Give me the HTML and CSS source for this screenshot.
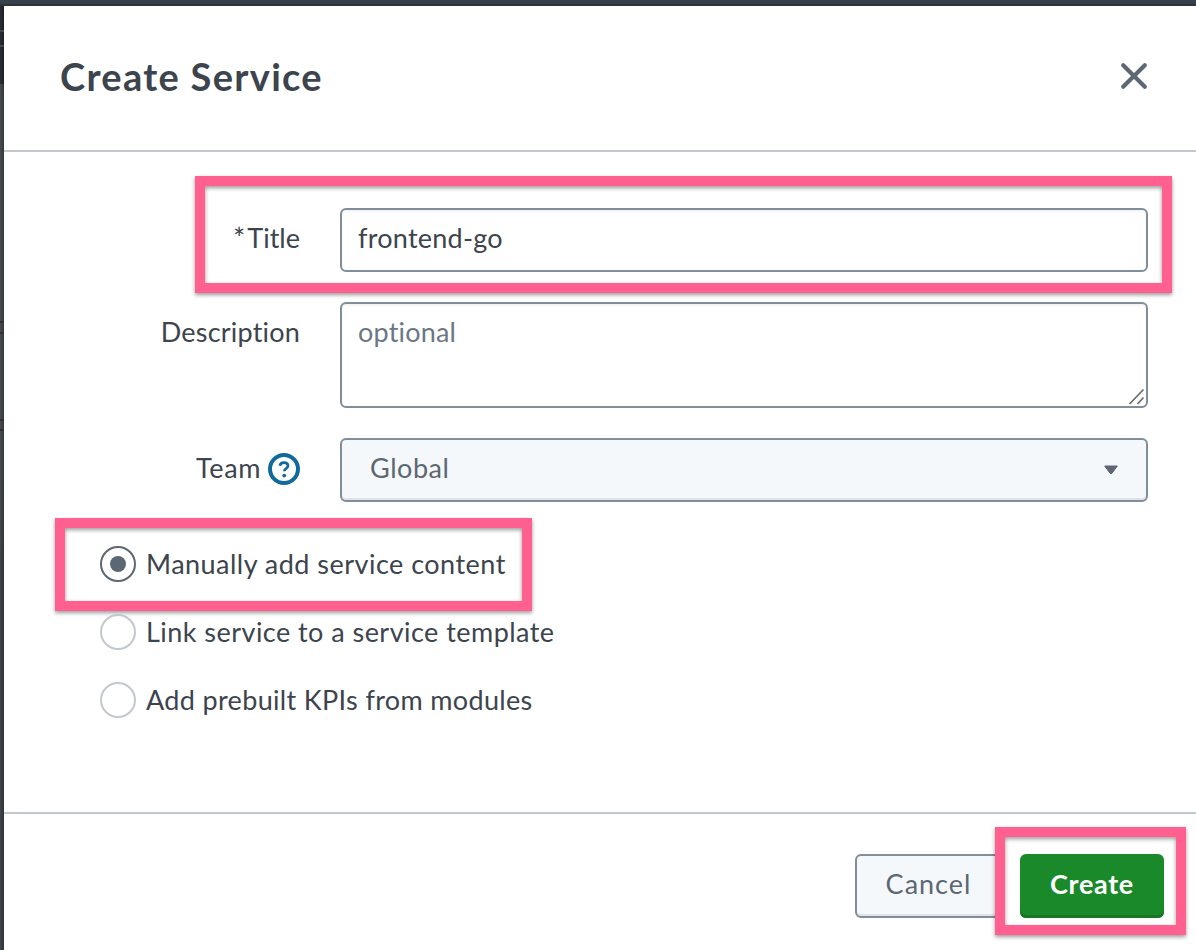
FILE: index.html
```
<!DOCTYPE html>
<html lang="en">
<head>
<meta charset="utf-8">
<title>Create Service</title>
<link rel="stylesheet" href="styles.css">
</head>
<body>
<div class="backdrop">
  <div class="edge"><i class="trace trace-a"></i><i class="trace trace-b"></i><i class="trace trace-c"></i></div>
  <main class="dialog">
    <header class="head">
      <h1 class="heading">Create Service</h1>
      <svg class="close" width="28" height="28" viewBox="0 0 28 28"><path d="M3.2 3.2 24.8 24.8M24.8 3.2 3.2 24.8" stroke="#5c6773" stroke-width="4.2" stroke-linecap="round"/></svg>
    </header>
    <section class="body">
      <div class="row row-title">
        <div class="label"><span class="star">*</span><span class="t-title">Title</span></div>
        <div class="field"><span class="t-value">frontend-go</span></div>
        <div class="callout callout-title"></div>
      </div>
      <div class="row">
        <div class="label"><span class="t-desc">Description</span></div>
        <div class="field area"><span class="t-optional">optional</span>
          <svg class="grip" width="18" height="18" viewBox="0 0 18 18"><path d="M1.5 16 15.500 1.500M9.500 16 15.500 9.500" stroke="#68696a" stroke-width="1.7" fill="none"/></svg>
        </div>
      </div>
      <div class="row">
        <div class="label"><span class="t-team">Team</span>
          <svg class="help" width="32" height="32" viewBox="0 0 32 32"><circle cx="16" cy="16" r="14" fill="#fff" stroke="#106b9c" stroke-width="4"/><path d="M11.900 12.800C12.200 10.600 13.700 9.600 16 9.600c2.300 0 4 1.200 4 3.200 0 2.800-3.700 2.600-3.700 5.500" fill="none" stroke="#106b9c" stroke-width="2.700"/><circle cx="16.200" cy="22.600" r="1.900" fill="#106b9c"/></svg>
        </div>
        <div class="field select"><span class="t-global">Global</span>
          <svg class="caret" width="16" height="10" viewBox="0 0 16 10"><path d="M1.700 1h12.600L9 8.200Q8 9.300 7 8.200Z" fill="#5c6773" stroke="#5c6773" stroke-linejoin="round"/></svg>
        </div>
      </div>
      <div class="options">
        <div class="option chosen"><span class="radio"></span><span class="t-manual">Manually add service content</span><div class="callout callout-option"></div></div>
        <div class="option"><span class="radio"></span><span class="t-link">Link service to a service template</span></div>
        <div class="option"><span class="radio"></span><span class="t-kpi">Add prebuilt KPIs from modules</span></div>
      </div>
    </section>
    <footer class="foot">
      <div class="btn cancel"><span class="t-cancel">Cancel</span></div>
      <div class="btn create"><span class="t-create">Create</span><div class="callout callout-create"></div></div>
    </footer>
  </main>
</div>
</body>
</html>
```
FILE: styles.css
```
* { box-sizing: border-box; }
body {
  margin: 0;
  font: 27px/36px Lato, "Open Sans", sans-serif;
  font-variant-ligatures: none;
  color: #3c444d;
  overflow: hidden;
}
.backdrop {
  display: flex;
  width: 1196px;
  height: 950px;
  padding-top: 6px;
  background: linear-gradient(#38404b 0, #38404b 3px, #292d35 6px, #292d35 84px, #4a4d50 84px, #4a4d50 470px, #42464d 560px, #42464d 100%);
}
.edge { position: relative; width: 4px; background: linear-gradient(90deg, transparent, rgba(0, 0, 0, .3)); }
.trace { position: absolute; left: 0; width: 4px; }
.trace-a { top: 24px; height: 17px; border: solid #44494f; border-width: 2px 0; }
.trace-b { top: 315px; height: 13px; border: solid #2e3032; border-width: 2px 0; }
.trace-c { top: 413px; height: 12px; border: solid #2e3032; border-width: 2px 0; }
.dialog { display: flex; flex-direction: column; flex: 1; background: #fff; white-space: nowrap; }
.head {
  display: flex;
  justify-content: space-between;
  align-items: center;
  height: 146px;
  padding: 0 48px 4px 56px;
  border-bottom: 2px solid #c3c8ce;
}
.heading { margin: 0; font-size: 38px; line-height: 46px; font-weight: 700; letter-spacing: 1.3px; }
.close { display: block; }
.body { display: flex; flex-direction: column; gap: 30px; height: 662px; padding: 56px 48px 0 40px; border-bottom: 2px solid #c3c8ce; }
.row { position: relative; display: grid; grid-template-columns: 256px 808px; column-gap: 40px; }
.label { display: flex; justify-content: flex-end; height: 62px; padding-top: 12px; }
.star { margin-right: 2px; font-size: 29px; }
.t-value { letter-spacing: .25px; }
.t-desc { letter-spacing: .2px; }
.t-optional { letter-spacing: .2px; }
.t-team { letter-spacing: .6px; }
.t-global { letter-spacing: .55px; }
.t-manual { letter-spacing: .48px; }
.t-link { letter-spacing: .46px; }
.t-kpi { letter-spacing: .34px; }
.t-cancel { letter-spacing: 1px; }
.t-create { letter-spacing: .7px; }
.help { margin: 3px 0 0 7px; }
.field {
  position: relative;
  height: 64px;
  padding: 10px 16px;
  border: 2px solid #818d99;
  border-radius: 6px;
  box-shadow: inset 0 2px 2px rgba(60, 68, 77, .06);
}
.area { height: 106px; color: #6b7785; }
.grip { position: absolute; right: 0; bottom: 0; }
.select {
  display: flex;
  justify-content: space-between;
  padding: 10px 27px 10px 28px;
  background: #f5f8fa;
  color: #5c6773;
  box-shadow: inset 0 -2px #dfe3e8;
}
.caret { margin: 15px 0 0; }
.options { display: flex; flex-direction: column; gap: 32px; margin-top: 14px; padding-left: 56px; }
.option { position: relative; display: flex; align-items: center; gap: 10px; width: 460px; height: 36px; }
.radio { display: grid; place-items: center; width: 36px; height: 36px; border: 2px solid #c3c8ce; border-radius: 50%; }
.chosen .radio { border-color: #5c6773; }
.chosen .radio::after { content: ""; width: 16px; height: 16px; border-radius: 50%; background: #5c6773; }
.foot { display: flex; justify-content: flex-end; gap: 16px; padding: 40px 32px 0 0; }
.btn { position: relative; display: flex; justify-content: center; height: 64px; padding-top: 12px; border-radius: 6px; }
.cancel { width: 149px; padding: 10px 2px 0 0; border: 2px solid #818d99; background: #f5f8fa; color: #5c6773; box-shadow: inset 0 -2px #dfe3e8; }
.create { width: 144px; background: #1a8929; color: #fff; font-weight: 700; box-shadow: inset 0 -3px #1c7427; }
.callout {
  position: absolute;
  border: 10px solid #ff6090;
  box-shadow: 0 2px 4px rgba(0, 0, 0, .4), inset 0 2px 4px rgba(0, 0, 0, .4);
}
.callout-title { left: 151px; top: -32px; width: 977px; height: 117px; }
.callout-option { left: -45px; top: -28px; width: 477px; height: 93px; }
.callout-create { left: -25px; top: -27px; width: 191px; height: 108px; }
```
